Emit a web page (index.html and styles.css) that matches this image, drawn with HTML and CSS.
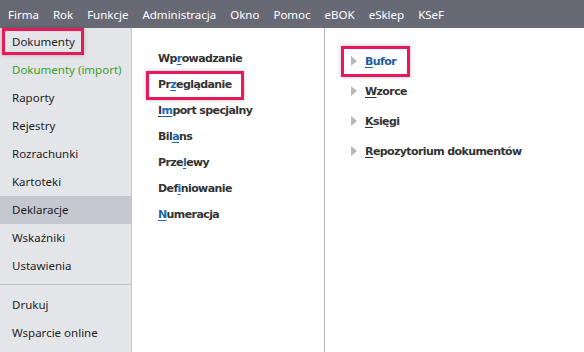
FILE: index.html
```html
<!DOCTYPE html>
<html lang="pl">
<head>
    <meta charset="UTF-8">
    <title>Dokumenty</title>
    <link rel="stylesheet" href="styles.css">
</head>
<body>
    <div class="menu-bar">
        <span>Firma</span>
        <span>Rok</span>
        <span>Funkcje</span>
        <span>Administracja</span>
        <span>Okno</span>
        <span>Pomoc</span>
        <span>eBOK</span>
        <span>eSklep</span>
        <span>KSeF</span>
    </div>

    <div class="main">
        <div class="sidebar">
            <div class="side-group">
                <div class="side-item"><span class="hl hl-side">Dokumenty</span></div>
                <div class="side-item green">Dokumenty (import)</div>
                <div class="side-item">Raporty</div>
                <div class="side-item">Rejestry</div>
                <div class="side-item">Rozrachunki</div>
                <div class="side-item">Kartoteki</div>
                <div class="side-item active">Deklaracje</div>
                <div class="side-item">Wskaźniki</div>
                <div class="side-item">Ustawienia</div>
            </div>
            <div class="side-group bottom">
                <div class="side-item">Drukuj</div>
                <div class="side-item">Wsparcie online</div>
            </div>
        </div>

        <div class="middle">
            <div class="mid-item">Wp<u>r</u>owadzanie</div>
            <div class="mid-item"><span class="hl hl-mid">Pr<u>z</u>eglądanie</span></div>
            <div class="mid-item"><u class="dark">I</u><u>m</u>port specjalny</div>
            <div class="mid-item">Bil<u>a</u>ns</div>
            <div class="mid-item">Prze<u>l</u>ewy</div>
            <div class="mid-item">Def<u>i</u>niowanie</div>
            <div class="mid-item"><u>N</u>umeracja</div>
        </div>

        <div class="right">
            <div class="right-item selected"><span class="hl hl-right"><i class="arrow"></i><u>B</u>ufor</span></div>
            <div class="right-item"><i class="arrow"></i><u>W</u>zorce</div>
            <div class="right-item"><i class="arrow"></i><u>K</u>sięgi</div>
            <div class="right-item"><i class="arrow"></i><u>R</u>epozytorium dokumentów</div>
        </div>
    </div>
</body>
</html>
```

FILE: styles.css
```css
* {
    box-sizing: border-box;
}

body {
    margin: 0;
    width: 584px;
    height: 352px;
    overflow: hidden;
    background: #fff;
    font-family: 'Noto Sans', 'Open Sans', sans-serif;
}

.menu-bar {
    height: 28px;
    background: #676a75;
    color: #fff;
    font-size: 11.5px;
    display: flex;
    align-items: center;
    padding-left: 8px;
    gap: 14px;
}

.main {
    display: flex;
    height: 324px;
}

.sidebar {
    width: 132px;
    background: #e4e5e9;
    border-right: 1px solid #c3c5cb;
    font-size: 11.5px;
    color: #1e1e1e;
}

.side-group.bottom {
    margin-top: 4px;
    border-top: 1px solid #c3c5cb;
    padding-top: 6px;
}

.side-item {
    height: 28px;
    line-height: 28px;
    padding-left: 12px;
}

.side-item.green {
    color: #3a9f2c;
}

.side-item.active {
    background: #c6c8cf;
}

.middle {
    width: 193px;
    border-right: 1px solid #b4b4b4;
    padding: 18px 0 0 26px;
    font-family: 'DejaVu Sans', sans-serif;
    font-weight: bold;
    font-size: 11px;
    color: #333;
    letter-spacing: -0.6px;
}

.mid-item {
    height: 26px;
    line-height: 26px;
}

.mid-item u {
    color: #1967b5;
    text-decoration-thickness: 1px;
    text-underline-offset: 2px;
}

.mid-item u.dark {
    color: #333;
}

.right {
    flex: 1;
    padding: 18px 0 0 26px;
    font-family: 'DejaVu Sans', sans-serif;
    font-weight: bold;
    font-size: 11px;
    color: #333;
    letter-spacing: -0.6px;
}

.right-item {
    height: 30px;
    display: flex;
    align-items: center;
}

.right-item u {
    text-decoration-thickness: 1px;
    text-underline-offset: 2px;
}

.right-item.selected {
    color: #1a5c9e;
}

.arrow {
    display: inline-block;
    width: 0;
    height: 0;
    border-top: 5px solid transparent;
    border-bottom: 5px solid transparent;
    border-left: 6px solid #b8b8b8;
    margin-right: 8px;
}

.hl {
    position: relative;
    display: inline-flex;
    align-items: center;
}

.hl::after {
    content: '';
    position: absolute;
    border: 3px solid #e8185a;
    box-shadow: 0 0 4px rgba(0, 0, 0, 0.25);
}

.hl-side::after {
    left: -10px;
    right: -9px;
    top: 0;
    bottom: 1px;
}

.hl-mid::after {
    left: -12px;
    right: -12px;
    top: -1px;
    bottom: -2px;
}

.hl-right::after {
    left: -10px;
    right: -14px;
    top: -9px;
    bottom: -9px;
}
```
